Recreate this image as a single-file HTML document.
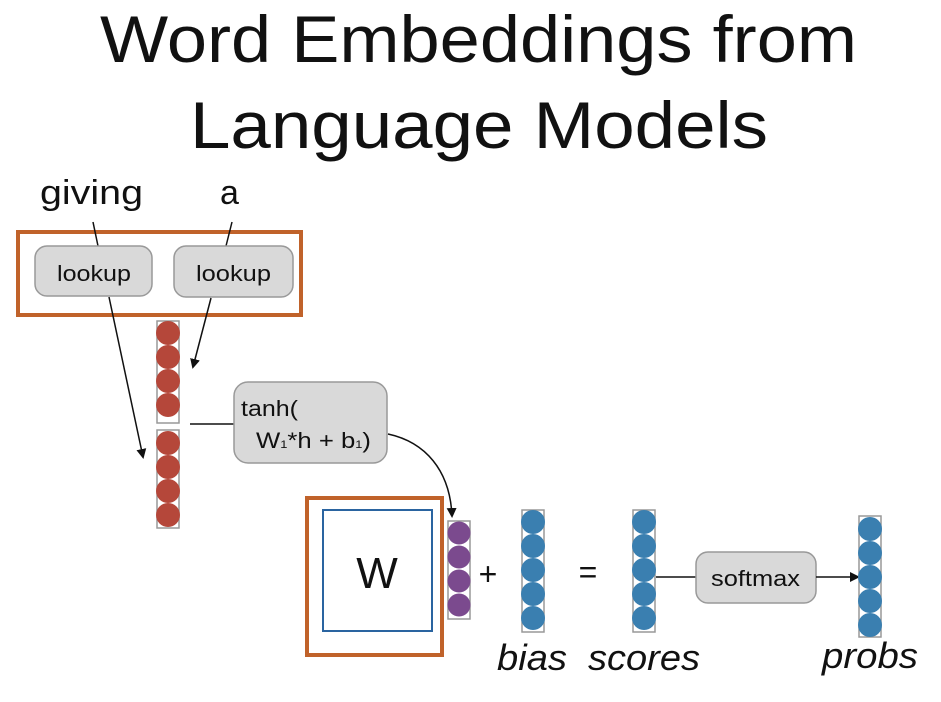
<!DOCTYPE html>
<html><head><meta charset="utf-8"><style>
body{margin:0;background:#fff;}
svg{display:block;font-family:"Liberation Sans",sans-serif;}
</style></head><body>
<svg width="941" height="702" viewBox="0 0 941 702" xmlns="http://www.w3.org/2000/svg">
<defs>
<marker id="ah" markerWidth="10" markerHeight="10" refX="8" refY="5" orient="auto" markerUnits="userSpaceOnUse">
<path d="M0,0 L10,5 L0,10 z" fill="#111"/></marker>
</defs>
<text x="100" y="62" font-size="66" textLength="757" lengthAdjust="spacingAndGlyphs" fill="#111">Word Embeddings from</text>
<text x="190" y="148" font-size="66" textLength="578" lengthAdjust="spacingAndGlyphs" fill="#111">Language Models</text>
<text x="40" y="204" font-size="34" textLength="103" lengthAdjust="spacingAndGlyphs" fill="#111">giving</text>
<text x="220" y="204" font-size="34" fill="#111">a</text>

<rect x="18" y="232" width="283" height="83" fill="none" stroke="#c0622a" stroke-width="4"/>
<line x1="93" y1="222" x2="98" y2="246" stroke="#111" stroke-width="1.5"/>
<line x1="232" y1="222" x2="226" y2="246" stroke="#111" stroke-width="1.5"/>
<rect x="35" y="246" width="117" height="50" rx="12" fill="#d9d9d9" stroke="#999" stroke-width="1.5"/>
<rect x="174" y="246" width="119" height="51" rx="12" fill="#d9d9d9" stroke="#999" stroke-width="1.5"/>
<text x="57" y="281" font-size="22" textLength="74" lengthAdjust="spacingAndGlyphs" fill="#111">lookup</text>
<text x="196" y="281" font-size="22" textLength="75" lengthAdjust="spacingAndGlyphs" fill="#111">lookup</text>

<line x1="109" y1="297" x2="143" y2="457" stroke="#111" stroke-width="1.5" marker-end="url(#ah)"/>
<line x1="211" y1="298" x2="193" y2="367" stroke="#111" stroke-width="1.5" marker-end="url(#ah)"/>

<rect x="157" y="321" width="22" height="102" fill="#fff" stroke="#999" stroke-width="1.5"/>
<g fill="#b5473a"><circle cx="168" cy="333" r="12"/><circle cx="168" cy="357" r="12"/><circle cx="168" cy="381" r="12"/><circle cx="168" cy="405" r="12"/></g>
<rect x="157" y="430" width="22" height="98" fill="#fff" stroke="#999" stroke-width="1.5"/>
<g fill="#b5473a"><circle cx="168" cy="443" r="12"/><circle cx="168" cy="467" r="12"/><circle cx="168" cy="491" r="12"/><circle cx="168" cy="515" r="12"/></g>

<line x1="190" y1="424" x2="234" y2="424" stroke="#111" stroke-width="1.5"/>
<rect x="234" y="382" width="153" height="81" rx="14" fill="#d9d9d9" stroke="#999" stroke-width="1.5"/>
<text x="241" y="416" font-size="22" textLength="57" lengthAdjust="spacingAndGlyphs" fill="#111">tanh(</text>
<text x="256" y="448" font-size="22" textLength="115" lengthAdjust="spacingAndGlyphs" fill="#111">W<tspan font-size="11">1</tspan>*h + b<tspan font-size="11">1</tspan>)</text>
<path d="M388,434 C425,442 450,470 452,516" fill="none" stroke="#111" stroke-width="1.5" marker-end="url(#ah)"/>

<rect x="307" y="498" width="135" height="157" fill="none" stroke="#c0622a" stroke-width="4"/>
<rect x="323" y="510" width="109" height="121" fill="#fff" stroke="#2a64a0" stroke-width="2"/>
<text x="377" y="588" font-size="44" text-anchor="middle" fill="#111">W</text>

<rect x="448" y="521" width="22" height="98" fill="#fff" stroke="#999" stroke-width="1.5"/>
<g fill="#7b4a8e"><circle cx="459" cy="533" r="11.5"/><circle cx="459" cy="557" r="11.5"/><circle cx="459" cy="581" r="11.5"/><circle cx="459" cy="605" r="11.5"/></g>
<text x="488" y="585" font-size="32" text-anchor="middle" fill="#111">+</text>

<rect x="522" y="510" width="22" height="122" fill="#fff" stroke="#999" stroke-width="1.5"/>
<g fill="#3a7fb0"><circle cx="533" cy="522" r="12"/><circle cx="533" cy="546" r="12"/><circle cx="533" cy="570" r="12"/><circle cx="533" cy="594" r="12"/><circle cx="533" cy="618" r="12"/></g>
<text x="588" y="583" font-size="32" text-anchor="middle" fill="#111">=</text>

<rect x="633" y="510" width="22" height="122" fill="#fff" stroke="#999" stroke-width="1.5"/>
<g fill="#3a7fb0"><circle cx="644" cy="522" r="12"/><circle cx="644" cy="546" r="12"/><circle cx="644" cy="570" r="12"/><circle cx="644" cy="594" r="12"/><circle cx="644" cy="618" r="12"/></g>

<line x1="656" y1="577" x2="696" y2="577" stroke="#111" stroke-width="1.5"/>
<rect x="696" y="552" width="120" height="51" rx="12" fill="#d9d9d9" stroke="#999" stroke-width="1.5"/>
<text x="711" y="586" font-size="22" textLength="89" lengthAdjust="spacingAndGlyphs" fill="#111">softmax</text>
<line x1="816" y1="577" x2="858" y2="577" stroke="#111" stroke-width="1.5" marker-end="url(#ah)"/>

<rect x="859" y="516" width="22" height="121" fill="#fff" stroke="#999" stroke-width="1.5"/>
<g fill="#3a7fb0"><circle cx="870" cy="529" r="12"/><circle cx="870" cy="553" r="12"/><circle cx="870" cy="577" r="12"/><circle cx="870" cy="601" r="12"/><circle cx="870" cy="625" r="12"/></g>

<g font-size="36" font-style="italic" fill="#111">
<text x="497" y="670" textLength="70" lengthAdjust="spacingAndGlyphs">bias</text>
<text x="588" y="670" textLength="112" lengthAdjust="spacingAndGlyphs">scores</text>
<text x="822" y="668" textLength="96" lengthAdjust="spacingAndGlyphs">probs</text>
</g>
</svg>
</body></html>
